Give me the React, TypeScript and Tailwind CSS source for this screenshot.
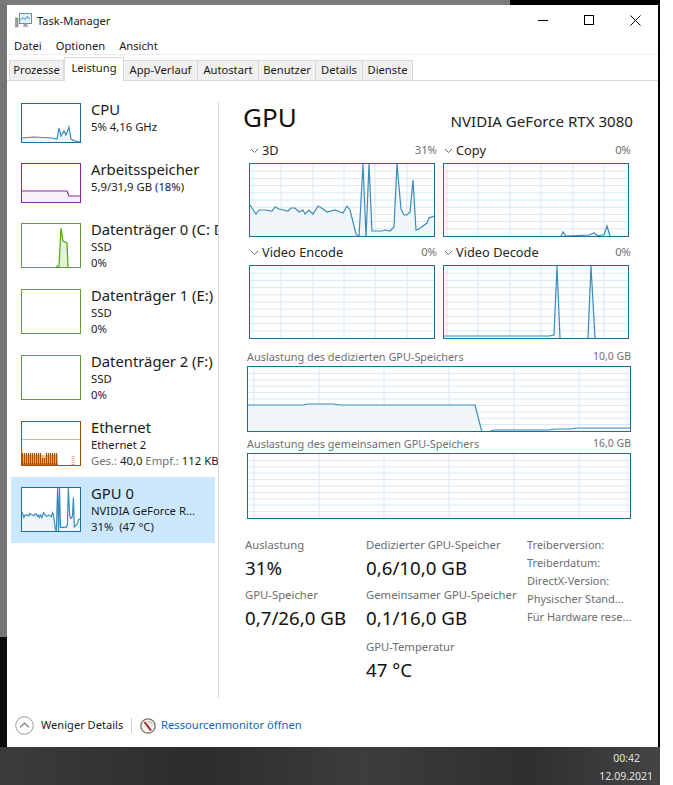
import React from 'react';

type Pt = [number, number];

const BLUE = '#1a6f9f';
const LINE = '#3a8bbb';

const load3d: Pt[] = [
  [0, 41], [6, 50], [9, 46], [15, 46], [22, 47], [25, 43], [29, 45], [38, 47], [41, 44], [45, 44], [49, 48],
  [53, 46], [55, 50], [59, 46], [63, 50], [68, 42], [73, 45], [77, 48], [85, 46], [93, 49], [97, 42], [100, 46],
  [106, 70], [109, 73], [113, 0], [116, 73], [119, 0], [122, 67], [132, 67], [135, 66], [140, 67], [144, 63],
  [147, 0], [151, 45], [154, 51], [157, 51], [160, 48], [163, 16], [166, 66], [169, 65], [177, 59], [179, 54], [184, 52],
];
const copyLoad: Pt[] = [
  [117, 72], [119, 68], [122, 72], [145, 71], [150, 69], [154, 72], [157, 71], [160, 71], [163, 62], [166, 72],
];
const decodeLoad: Pt[] = [[0, 70], [105, 70], [110, 69], [113, 0], [116, 72]];
const decodeLoad2: Pt[] = [[144, 72], [147, 0], [151, 72]];
const dedicated: Pt[] = [
  [0, 38], [55, 38], [60, 37], [85, 37], [92, 38], [227, 38], [234, 65], [240, 65], [246, 63], [300, 63],
  [308, 62], [322, 62], [330, 61], [382, 61],
];
const cpuThumb: Pt[] = [
  [0, 34], [12, 33], [30, 34], [35, 35], [37, 24], [39, 32], [42, 27], [44, 31], [47, 23], [49, 35], [53, 37], [58, 38],
];
const memThumb: Pt[] = [[0, 27], [45, 27], [47, 32], [58, 32]];
const diskThumb: Pt[] = [[34, 43], [36, 42], [37, 42], [39, 4], [41, 17], [43, 18], [45, 19], [46, 43]];

// stripes of the ethernet thumbnail, shorter around the dip in the middle
const ethernetBars = Array.from({ length: 18 }, (_, i) => {
  const x = i * 2 + 0.5;
  return { x, top: x > 19 && x < 24 ? 36 : 31 };
});

const toPath = (pts: Pt[]) => pts.map((p) => p.join(',')).join(' ');

function Graph({
  w, h, vs = [], rows = 0, series = [], border = BLUE, line = LINE, fill = '#eff5fa', className = '',
}: {
  w: number; h: number; vs?: number[]; rows?: number; series?: Pt[][]; border?: string; line?: string; fill?: string; className?: string;
}) {
  const iw = w - 2;
  const ih = h - 2;
  const hs = Array.from({ length: Math.max(rows - 1, 0) }, (_, i) => ((i + 1) * ih) / rows);
  return (
    <div className={`border bg-white shrink-0 ${className}`} style={{ width: w, height: h, borderColor: border }}>
      <svg width={iw} height={ih} viewBox={`0 0 ${iw} ${ih}`} className="block">
        {hs.map((y) => (
          <line key={y} x1={0} x2={iw} y1={y} y2={y} stroke="#d9e8f2" />
        ))}
        {vs.map((x) => (
          <line key={x} x1={x} x2={x} y1={0} y2={ih} stroke="#d9e8f2" />
        ))}
        {series.map((pts, i) => (
          <g key={i}>
            <polygon
              points={`${pts[0][0]},${ih} ${toPath(pts)} ${pts[pts.length - 1][0]},${ih}`}
              fill={fill}
              fillOpacity={0.85}
            />
            <polyline points={toPath(pts)} fill="none" stroke={line} strokeWidth={1.2} />
          </g>
        ))}
      </svg>
    </div>
  );
}

function GpuThumb() {
  const pts = load3d.map(([x, y]) => [(x * 58) / 184, (y * 43) / 73] as Pt);
  return <Graph w={60} h={45} series={[pts]} />;
}

function EthernetThumb() {
  return (
    <div className="w-[60px] h-[45px] border border-[#a74f01] shrink-0">
      <svg width={58} height={43} viewBox="0 0 58 43" className="block">
        <line x1={0} x2={58} y1={17.5} y2={17.5} stroke="#d9b491" />
        <rect x={0} y={33} width={36} height={10} fill="#e6c3a2" />
        {ethernetBars.map((b) => (
          <line key={b.x} x1={b.x} x2={b.x} y1={b.top} y2={43} stroke="#a74f01" strokeWidth={1.2} />
        ))}
        <line x1={0} x2={36} y1={42} y2={42} stroke="#a74f01" />
        <line x1={51} x2={51} y1={34} y2={43} stroke="#e3a79a" strokeWidth={3} strokeDasharray="1 1" />
      </svg>
    </div>
  );
}

const tabs = [
  { label: 'Prozesse', w: 'w-[55px]' },
  { label: 'Leistung', w: 'w-[60px]', active: true },
  { label: 'App-Verlauf', w: 'w-[74px]' },
  { label: 'Autostart', w: 'w-[61px]' },
  { label: 'Benutzer', w: 'w-[57px]' },
  { label: 'Details', w: 'w-[47px]' },
  { label: 'Dienste', w: 'w-[50px]' },
];

function SideRow({
  thumb, title, lines, selected, h = 'h-[66px]',
}: {
  thumb: React.ReactNode; title: string; lines: React.ReactNode[]; selected?: boolean; h?: string;
}) {
  return (
    <div className={`${h} w-[204px] flex gap-[10px] pl-[10px] pt-[10px] ${selected ? 'bg-[#cce8ff]' : ''}`}>
      {thumb}
      <div className="-mt-[4px] whitespace-pre text-[#1a1a1a]">
        <div className="text-[14.8px] leading-[20px]">{title}</div>
        {lines.map((l, i) => (
          <div key={i} className="text-[11.3px] leading-[16px]">{l}</div>
        ))}
      </div>
    </div>
  );
}

function EngineGraph({ name, value, series, vs }: { name: string; value: string; series?: Pt[][]; vs: number[] }) {
  return (
    <div className="w-[186px] pb-[4px]">
      <div className="h-[22px] mb-[2px] pt-[1px] flex items-center">
        <svg width={9} height={6} viewBox="0 0 9 6" className="mr-[3px] ml-[1px]">
          <path d="M1 1l3.5 3.5L8 1" fill="none" stroke="#6a6a6a" />
        </svg>
        <span className="text-[12.8px] text-[#262626]">{name}</span>
        <span className="ml-auto -mr-[2px] text-[11.3px] text-[#707070]">{value}</span>
      </div>
      <Graph w={186} h={74} rows={10} vs={vs} series={series} />
    </div>
  );
}

function Stat({ label, value, className = '' }: { label: string; value: string; className?: string }) {
  return (
    <div className={className}>
      <div className="text-[11.3px] leading-[16px] text-[#6d6d6d] whitespace-nowrap">{label}</div>
      <div className="text-[18.7px] leading-[26px] mt-[2px] text-[#111] whitespace-nowrap">{value}</div>
    </div>
  );
}

export default function App() {
  const vs1 = [31, 63, 94, 125, 157];
  const vs2 = [3, 34, 66, 97, 129, 160];
  const memVs = [6, 71, 136, 201, 266, 331];

  return (
    <div className="w-[673px] h-[785px] bg-white overflow-hidden [font-family:'Noto_Sans',sans-serif]">
      <div className="w-[660px] h-full flex flex-col">
        {/* top edge of whatever is behind the window */}
        <div className="h-[5px] flex shrink-0">
          <div className="w-[510px] bg-[#7a7a7a]" />
          <div className="flex-1 bg-black" />
        </div>

        <div className="flex flex-1 min-h-0">
          <div className="w-[7px] flex flex-col">
            <div className="h-[632px] bg-[#757575]" />
            <div className="flex-1 bg-[#0c0c0c]" />
          </div>

          {/* window */}
          <div className="w-[651px] bg-white flex flex-col">
            <div className="h-[30px] flex items-center pl-[8px] shrink-0">
              <svg width={17} height={15} viewBox="0 0 17 15" className="mr-[5px] mt-[1px]">
                <rect x={0.5} y={5} width={2.5} height={9} fill="#9aa7a0" stroke="#6c7a72" strokeWidth={0.5} />
                <rect x={1} y={5} width={1.5} height={2} fill="#5db35d" />
                <rect x={4.5} y={0.5} width={12} height={10} fill="#dff1fb" stroke="#7a8c98" />
                <path d="M5.5 7l2.5-2.5 2 2 2-3 3 2.5" fill="none" stroke="#2b7fc0" strokeWidth={0.9} />
                <path d="M9 11h3v2H9zM7.5 13.5h6" fill="#a7b1b7" stroke="#8a959c" strokeWidth={0.6} />
              </svg>
              <span className="text-[11.1px] text-[#222] pt-[2px]">Task-Manager</span>
              <div className="ml-auto flex">
                <div className="w-[46px] h-[30px] flex items-center justify-center">
                  <div className="w-[10px] h-px bg-black" />
                </div>
                <div className="w-[46px] h-[30px] flex items-center justify-center">
                  <div className="w-[10px] h-[10px] border border-black" />
                </div>
                <div className="w-[46px] h-[30px] flex items-center justify-center">
                  <svg width={11} height={11} viewBox="0 0 11 11">
                    <path d="M0.5 0.5l10 10M10.5 0.5l-10 10" stroke="#000" fill="none" />
                  </svg>
                </div>
              </div>
            </div>

            <div className="h-[20px] pt-[4px] flex items-center gap-[14px] pl-[7px] text-[11.2px] text-[#1a1a1a] border-b border-[#eeeeee] shrink-0">
              <span>Datei</span>
              <span>Optionen</span>
              <span>Ansicht</span>
            </div>

            <div className="h-[26px] pt-[3px] flex items-end pl-[2px] border-b border-[#d9d9d9] shrink-0">
              {tabs.map((t) =>
                t.active ? (
                  <div
                    key={t.label}
                    className={`${t.w} h-[24px] -mb-px bg-white border border-b-0 border-[#d9d9d9] flex items-center justify-center text-[11.2px] text-[#1a1a1a] pb-[2px]`}
                  >
                    {t.label}
                  </div>
                ) : (
                  <div
                    key={t.label}
                    className={`${t.w} h-[20px] bg-[#f0f0f0] border border-l-0 first:border-l border-b-0 border-[#d9d9d9] flex items-center justify-center text-[11.2px] text-[#1a1a1a]`}
                  >
                    {t.label}
                  </div>
                ),
              )}
            </div>

            <div className="flex h-[624px] shrink-0">
              {/* sidebar */}
              <div className="w-[211px] pt-[12px] pl-[4px] overflow-hidden shrink-0">
                <SideRow
                  h="h-[60px]"
                  thumb={<Graph w={60} h={40} series={[cpuThumb]} />}
                  title="CPU"
                  lines={['5% 4,16 GHz']}
                />
                <SideRow
                  h="h-[60px]"
                  thumb={<Graph w={60} h={40} border="#8b2aa8" line="#8b2aa8" fill="#f4f0f6" series={[memThumb]} />}
                  title="Arbeitsspeicher"
                  lines={['5,9/31,9 GB (18%)']}
                />
                <SideRow
                  thumb={<Graph w={60} h={45} border="#5f9e2f" line="#4da60c" fill="#dff0d0" series={[diskThumb]} />}
                  title="Datenträger 0 (C: D:)"
                  lines={['SSD', '0%']}
                />
                <SideRow
                  thumb={<Graph w={60} h={45} border="#5f9e2f" />}
                  title="Datenträger 1 (E:)"
                  lines={['SSD', '0%']}
                />
                <SideRow
                  thumb={<Graph w={60} h={45} border="#5f9e2f" />}
                  title="Datenträger 2 (F:)"
                  lines={['SSD', '0%']}
                />
                <SideRow
                  thumb={<EthernetThumb />}
                  title="Ethernet"
                  lines={[
                    'Ethernet 2',
                    <span key="e">
                      <span className="text-[#707070]">Ges.:</span> 40,0 <span className="text-[#707070]">Empf.:</span> 112 KBit/s
                    </span>,
                  ]}
                />
                <SideRow
                  selected
                  thumb={<GpuThumb />}
                  title="GPU 0"
                  lines={['NVIDIA GeForce R...', '31%  (47 °C)']}
                />
              </div>

              <div className="w-px bg-[#dcdcdc] mt-[21px] mb-[7px] shrink-0" />

              {/* detail panel */}
              <div className="flex-1 pl-[24px] pr-[25px] pt-[21px]">
                <div className="h-[37px] flex items-start justify-between">
                  <span className="text-[26px] leading-[30px] text-[#111]">GPU</span>
                  <span className="text-[15.1px] leading-[20px] text-[#222] pt-[9px]">NVIDIA GeForce RTX 3080</span>
                </div>

                <div className="ml-[6px] grid grid-cols-[186px_186px] gap-x-[8px]">
                  <EngineGraph name="3D" value="31%" series={[load3d]} vs={vs1} />
                  <EngineGraph name="Copy" value="0%" series={[copyLoad]} vs={vs2} />
                  <EngineGraph name="Video Encode" value="0%" vs={vs1} />
                  <EngineGraph name="Video Decode" value="0%" series={[decodeLoad, decodeLoad2]} vs={vs2} />
                </div>

                <div className="ml-[4px] mt-[6px] w-[384px]">
                  <div className="h-[16px] mb-[1px] flex justify-between items-center text-[10.9px] text-[#707070]">
                    <span>Auslastung des dedizierten GPU-Speichers</span>
                    <span className="text-[10.5px]">10,0 GB</span>
                  </div>
                  <Graph w={384} h={66} rows={10} vs={memVs} series={[dedicated]} />
                  <div className="h-[16px] mt-[4px] mb-[1px] flex justify-between items-center text-[10.9px] text-[#707070]">
                    <span>Auslastung des gemeinsamen GPU-Speichers</span>
                    <span className="text-[10.5px]">16,0 GB</span>
                  </div>
                  <Graph w={384} h={66} rows={10} vs={memVs} />
                </div>

                <div className="ml-[2px] mt-[18px] flex">
                  <div className="w-[121px] flex flex-col gap-[6px]">
                    <Stat label="Auslastung" value="31%" />
                    <Stat label="GPU-Speicher" value="0,7/26,0 GB" />
                  </div>
                  <div className="w-[161px] flex flex-col gap-[6px]">
                    <Stat label="Dedizierter GPU-Speicher" value="0,6/10,0 GB" />
                    <Stat label="Gemeinsamer GPU-Speicher" value="0,1/16,0 GB" />
                    <Stat label="GPU-Temperatur" value="47 °C" className="mt-[2px]" />
                  </div>
                  <div className="flex-1 text-[11px] leading-[18px] text-[#6d6d6d] whitespace-nowrap -mt-[1px]">
                    <div>Treiberversion:</div>
                    <div>Treiberdatum:</div>
                    <div>DirectX-Version:</div>
                    <div>Physischer Stand...</div>
                    <div>Für Hardware rese...</div>
                  </div>
                </div>
              </div>
            </div>

            {/* footer */}
            <div className="flex-1 flex items-center pl-[8px] pb-[1px]">
              <svg width={19} height={19} viewBox="0 0 19 19" className="mr-[7px]">
                <circle cx={9.5} cy={9.5} r={8.8} fill="#fff" stroke="#9a9a9a" />
                <path d="M5 11.5l4.5-4.5 4.5 4.5" fill="none" stroke="#8a8a8a" strokeWidth={1.3} />
              </svg>
              <span className="text-[11.1px] text-[#1a1a1a] w-[90px] whitespace-nowrap">Weniger Details</span>
              <div className="w-px h-[15px] bg-[#cfcfcf] mr-[8px]" />
              <svg width={16} height={16} viewBox="0 0 16 16" className="mr-[5px]">
                <circle cx={8} cy={8} r={7.2} fill="#f4f1ea" stroke="#77736a" strokeWidth={1.3} />
                <path d="M4.5 4l6.5 8.5" stroke="#a81f2a" strokeWidth={2} />
                <path d="M8 3.2a4.8 4.8 0 0 1 4.6 3.6" fill="none" stroke="#b5b1a8" />
              </svg>
              <span className="text-[11.2px] text-[#1166b5] whitespace-nowrap">Ressourcenmonitor öffnen</span>
            </div>
          </div>

          <div className="w-[2px] bg-black" />
        </div>

        {/* taskbar */}
        <div className="h-[38px] shrink-0 bg-[linear-gradient(90deg,#3c3c3c,#2c2c2c_30%,#3d3d3d_55%,#2f2f2f_80%,#444444)] flex flex-col items-end pr-[7px] pt-[2px] text-[10.5px] leading-[18px] text-[#e0e0e0]">
          <div className="pr-[13px]">00:42</div>
          <div>12.09.2021</div>
        </div>
      </div>
    </div>
  );
}
